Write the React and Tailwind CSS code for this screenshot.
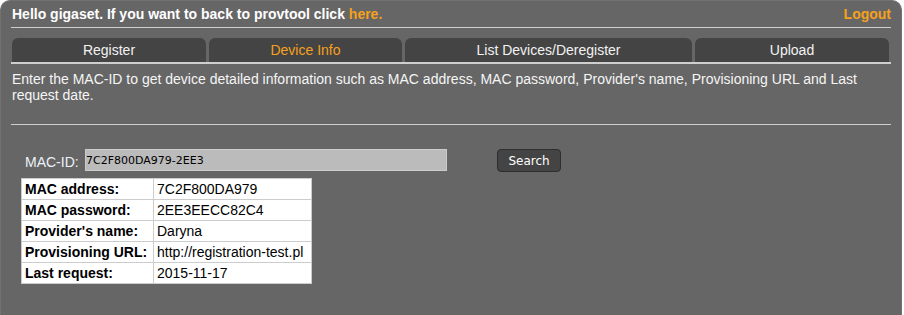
import { useState } from 'react'

const tabs = [
  { label: 'Register', w: 'w-[194px]' },
  { label: 'Device Info', w: 'w-[193px]', active: true },
  { label: 'List Devices/Deregister', w: 'w-[287px]' },
  { label: 'Upload', w: 'w-[194px]' },
]

const info = [
  ['MAC address:', '7C2F800DA979'],
  ['MAC password:', '2EE3EECC82C4'],
  ["Provider's name:", 'Daryna'],
  ['Provisioning URL:', 'http://registration-test.pl'],
  ['Last request:', '2015-11-17'],
]

export default function App() {
  const [mac, setMac] = useState('7C2F800DA979-2EE3')

  return (
    <div className="min-h-screen bg-white font-['Liberation_Sans',Arial,sans-serif]">
      <div className="w-[902px] h-[315px] box-border bg-[#666666] border border-b-0 border-[#727272] rounded-t-[10px] px-[10px] overflow-hidden">
        {/* Header */}
        <div className="h-[27px] box-border border-b border-[#cfcfcf] flex items-center justify-between text-[14px] leading-[16px] font-bold">
          <span className="text-white pl-[1px]">
            Hello gigaset. If you want to back to provtool click{' '}
            <a href="#" className="text-[#f4a11d]">here.</a>
          </span>
          <a href="#" className="text-[#f4a11d]">Logout</a>
        </div>

        {/* Tabs */}
        <div className="mt-[10px] h-[26px] box-border border-b-2 border-[#cfcfcf] flex gap-[3px] pl-[1px]">
          {tabs.map((t) => (
            <div
              key={t.label}
              className={`${t.w} h-[24px] rounded-t-[6px] bg-[#444444] flex items-center justify-center text-[14px] leading-[16px] ${t.active ? 'text-[#f4a11d]' : 'text-[#f2f2f2]'}`}
            >
              {t.label}
            </div>
          ))}
        </div>

        {/* Description */}
        <div className="pt-[7px] pb-[21px] pl-[1px] border-b border-[#cfcfcf] text-[14px] leading-[16px] text-[#f5f5f5]">
          Enter the MAC-ID to get device detailed information such as MAC address, MAC password, Provider's name, Provisioning URL and Last request date.
        </div>

        {/* Search row */}
        <div className="mt-[24px] flex items-start">
          <label className="ml-[14px] w-[60px] mt-[5px] text-[14px] leading-[16px] text-[#eef2f8]">MAC-ID:</label>
          <input
            value={mac}
            onChange={(e) => setMac(e.target.value)}
            className="w-[362px] h-[22px] box-border bg-[#bbbbbb] border border-[#cccccc] px-0 text-[11px] text-black font-['DejaVu_Sans',sans-serif] outline-none"
          />
          <button className="ml-[50px] w-[64px] h-[23px] box-border bg-[#444444] border border-[#2e2e2e] rounded-[4px] text-[12px] text-white font-['DejaVu_Sans',sans-serif]">
            Search
          </button>
        </div>

        {/* Result table */}
        <table className="mt-[6px] ml-[10px] border-collapse bg-white text-[14px] leading-[16px] text-black">
          <tbody>
            {info.map(([k, v]) => (
              <tr key={k} className="h-[21px]">
                <td className="w-[132px] box-border border border-[#cccccc] px-[3px] py-0 font-bold">{k}</td>
                <td className="w-[158px] box-border border border-[#cccccc] px-[3px] py-0">{v}</td>
              </tr>
            ))}
          </tbody>
        </table>
      </div>
    </div>
  )
}
